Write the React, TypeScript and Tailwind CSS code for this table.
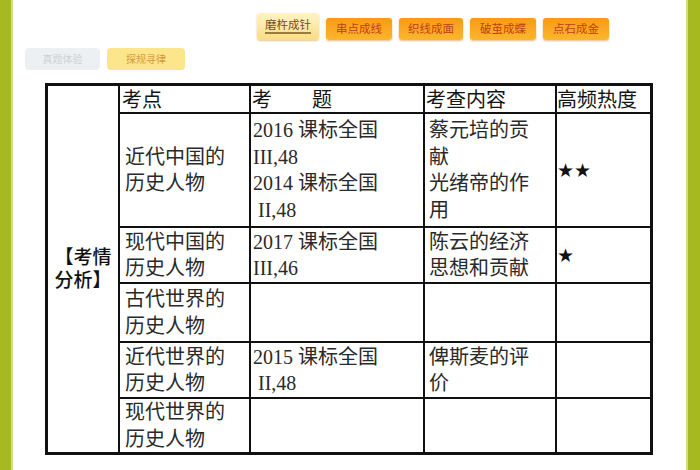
const serif = "font-['Liberation_Serif','Noto_Sans_CJK_SC',serif]"
const sans = "font-['Noto_Sans_CJK_SC','Noto_Sans',sans-serif]"

interface CellProps {
  children?: React.ReactNode
  className?: string
}

function HeadCell({ children, className = '' }: CellProps) {
  return (
    <div className={`flex items-center bg-white text-[20px] leading-none text-[#151515] ${sans} ${className}`}>
      {children}
    </div>
  )
}

function BodyCell({ children, className = '' }: CellProps) {
  return (
    <div className={`flex items-center bg-white text-[20px] leading-[26.5px] text-[#2a2a2a] whitespace-nowrap ${serif} ${className}`}>
      <div>{children}</div>
    </div>
  )
}

function Stars({ n }: { n: number }) {
  return (
    <div className="flex items-center bg-white font-['DejaVu_Sans',sans-serif] text-[19px] leading-none text-[#111]">
      {'★'.repeat(n)}
    </div>
  )
}

const rows = [
  {
    topic: ['近代中国的', '历史人物'],
    exam: ['2016 课标全国', 'III,48', '2014 课标全国', '\u00a0II,48'],
    content: ['蔡元培的贡', '献', '光绪帝的作', '用'],
    stars: 2,
  },
  {
    topic: ['现代中国的', '历史人物'],
    exam: ['2017 课标全国', 'III,46'],
    content: ['陈云的经济', '思想和贡献'],
    stars: 1,
  },
  { topic: ['古代世界的', '历史人物'], exam: [], content: [], stars: 0 },
  {
    topic: ['近代世界的', '历史人物'],
    exam: ['2015 课标全国', '\u00a0II,48'],
    content: ['俾斯麦的评', '价'],
    stars: 0,
  },
  { topic: ['现代世界的', '历史人物'], exam: [], content: [], stars: 0 },
]

function Lines({ lines }: { lines: string[] }) {
  return (
    <>
      {lines.map((l, i) => (
        <div key={i}>{l}</div>
      ))}
    </>
  )
}

export default function App() {
  return (
    <div className="flex h-[470px] w-[700px] bg-white">
      <div className="w-[13px] shrink-0 border-r-2 border-[#d3dc86] bg-[#a6b920]" />

      <div className="flex-1">
        {/* section tabs */}
        <div className={`flex items-end gap-[7px] pl-[244px] pt-[13px] text-[11.5px] leading-none ${sans}`}>
          <div className="flex h-[27px] w-[62px] items-center justify-center rounded-[3px] bg-gradient-to-b from-[#fff3c4] to-[#fbdc86] text-[#7a4a1c] shadow-[0_1px_2px_rgba(200,150,40,0.5)]">
            <span className="border-b-2 border-[#9b7a3a] pb-[2px]">磨杵成针</span>
          </div>
          {['串点成线', '织线成面', '破茧成蝶', '点石成金'].map((t, i) => (
            <div
              key={t}
              className={`flex h-[22px] items-center justify-center rounded-[3px] bg-gradient-to-b from-[#f89a16] to-[#fbb62c] text-[#c1401a] shadow-[0_1px_2px_rgba(210,120,20,0.5)] ${i === 1 ? 'w-[64px]' : 'w-[66px]'}`}
            >
              {t}
            </div>
          ))}
        </div>

        <div className={`mt-[8px] flex gap-[7px] pl-[12px] text-[10px] leading-none ${sans}`}>
          <div className="flex h-[22px] w-[75px] items-center justify-center rounded-[4px] bg-[#edf0f2] text-[#cdd2d6]">
            真题体验
          </div>
          <div className="flex h-[22px] w-[78px] items-center justify-center rounded-[4px] bg-[#fde58c] text-[#d49a3c]">
            探规寻律
          </div>
        </div>

        {/* analysis table */}
        <div className="ml-[32px] mt-[13px] grid w-[608px] grid-cols-[70px_129px_172px_130px_93px] grid-rows-[26px_112px_54px_57px_54px_53px] gap-[2px] border-[3px] border-[#111] bg-[#111]">
          <div className="row-span-6 flex items-center justify-center bg-white text-center font-['Liberation_Sans','Noto_Sans_CJK_SC',sans-serif] text-[19px] font-medium leading-[23px] text-[#111]">
            <div>
              <div>【考情</div>
              <div>分析】</div>
            </div>
          </div>
          <HeadCell className="pl-[2px]">考点</HeadCell>
          <HeadCell className="pl-[1px]">考　　题</HeadCell>
          <HeadCell className="pl-[1px]">考查内容</HeadCell>
          <HeadCell>高频热度</HeadCell>

          {rows.map((r, i) => (
            <div key={i} className="contents">
              <BodyCell className="pl-[5px]">
                <Lines lines={r.topic} />
              </BodyCell>
              <BodyCell className="pl-[2px]">
                <Lines lines={r.exam} />
              </BodyCell>
              <BodyCell className="pl-[4px]">
                <Lines lines={r.content} />
              </BodyCell>
              <Stars n={r.stars} />
            </div>
          ))}
        </div>
      </div>

      <div className="w-[14px] shrink-0 border-l-2 border-[#d3dc86] bg-[#a6b920]" />
    </div>
  )
}
